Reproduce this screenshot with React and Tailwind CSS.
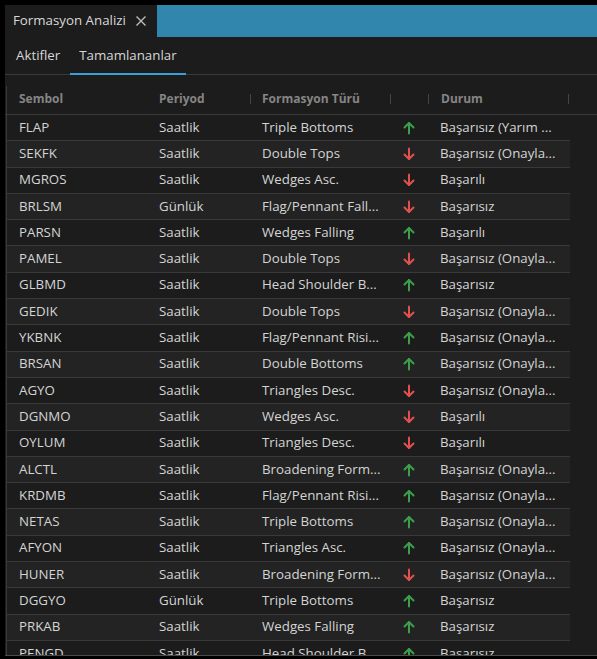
import React from "react";

const rows = [
  ["FLAP", "Saatlik", "Triple Bottoms", "up", "Başarısız (Yarım ..."],
  ["SEKFK", "Saatlik", "Double Tops", "down", "Başarısız (Onayla..."],
  ["MGROS", "Saatlik", "Wedges Asc.", "down", "Başarılı"],
  ["BRLSM", "Günlük", "Flag/Pennant Fall...", "down", "Başarısız"],
  ["PARSN", "Saatlik", "Wedges Falling", "up", "Başarılı"],
  ["PAMEL", "Saatlik", "Double Tops", "down", "Başarısız (Onayla..."],
  ["GLBMD", "Saatlik", "Head Shoulder B...", "up", "Başarısız"],
  ["GEDIK", "Saatlik", "Double Tops", "down", "Başarısız (Onayla..."],
  ["YKBNK", "Saatlik", "Flag/Pennant Risi...", "up", "Başarısız (Onayla..."],
  ["BRSAN", "Saatlik", "Double Bottoms", "up", "Başarısız (Onayla..."],
  ["AGYO", "Saatlik", "Triangles Desc.", "down", "Başarısız (Onayla..."],
  ["DGNMO", "Saatlik", "Wedges Asc.", "down", "Başarılı"],
  ["OYLUM", "Saatlik", "Triangles Desc.", "down", "Başarılı"],
  ["ALCTL", "Saatlik", "Broadening Form...", "up", "Başarısız (Onayla..."],
  ["KRDMB", "Saatlik", "Flag/Pennant Risi...", "up", "Başarısız (Onayla..."],
  ["NETAS", "Saatlik", "Triple Bottoms", "up", "Başarısız (Onayla..."],
  ["AFYON", "Saatlik", "Triangles Asc.", "up", "Başarısız (Onayla..."],
  ["HUNER", "Saatlik", "Broadening Form...", "down", "Başarısız (Onayla..."],
  ["DGGYO", "Günlük", "Triple Bottoms", "up", "Başarısız"],
  ["PRKAB", "Saatlik", "Wedges Falling", "up", "Başarısız"],
  ["PENGD", "Saatlik", "Head Shoulder B...", "up", "Başarısız"],
];

function Arrow({ dir }) {
  const up = dir === "up";
  return (
    <svg width="14" height="14" viewBox="0 0 14 14" fill="none"
      stroke={up ? "#3c9f4c" : "#e0514f"} strokeWidth="2" strokeLinecap="round" strokeLinejoin="round">
      {up ? (
        <>
          <path d="M7 12.5V2" />
          <path d="M2.5 6.5L7 2l4.5 4.5" />
        </>
      ) : (
        <>
          <path d="M7 1.5V12" />
          <path d="M2.5 7.5L7 12l4.5-4.5" />
        </>
      )}
    </svg>
  );
}

function Sep() {
  return <div className="w-px h-[10px] bg-[#454545]" />;
}

export default function App() {
  return (
    <div
      className="w-[597px] h-[659px] bg-black pt-[5px] pl-[5px] overflow-hidden"
      style={{ fontFamily: '"Open Sans", "Noto Sans", sans-serif' }}
    >
      <div className="h-[651px] bg-[#1c1c1c] border-b border-[#4a4a4a] flex flex-col overflow-hidden">
        {/* window tab bar */}
        <div className="flex h-[32px] shrink-0">
          <div className="w-[152px] flex items-center pl-[8px] gap-[9px] text-[13.3px] text-[#d8d8d8]">
            <span>Formasyon Analizi</span>
            <svg width="12" height="12" viewBox="0 0 12 12" stroke="#bdbdbd" strokeWidth="1.4">
              <path d="M1.5 1.5l9 9M10.5 1.5l-9 9" />
            </svg>
          </div>
          <div className="flex-1 bg-[#3086ad]" />
        </div>

        {/* sub tabs */}
        <div className="flex h-[38px] shrink-0 pt-[1px] border-b border-[#3a3a3a] text-[13.3px] text-[#d6d6d6]">
          <div className="pl-[11px] pr-[10px] flex items-center">Aktifler</div>
          <div className="relative px-[9px] flex items-center">
            Tamamlananlar
            <div className="absolute left-0 right-0 -bottom-px h-[2px] bg-[#3a9fd4]" />
          </div>
        </div>

        {/* header */}
        <div className="flex h-[40px] shrink-0 pt-[9px] border-b border-[#3a3a3a] text-[12px] font-bold text-[#858585]">
          <div className="w-[1px] self-stretch mt-[2px] bg-[#3a3a3a] ml-[1px]" />
          <div className="w-[140px] flex items-center pl-[12px]">Sembol</div>
          <div className="w-[103px] flex items-center pl-[12px]">Periyod</div>
          <div className="w-[140px] flex items-center">
            <Sep />
            <span className="pl-[11px]">Formasyon Türü</span>
          </div>
          <div className="w-[38px] flex items-center">
            <Sep />
          </div>
          <div className="w-[140px] flex items-center">
            <Sep />
            <span className="pl-[12px]">Durum</span>
          </div>
          <div className="flex items-center">
            <Sep />
          </div>
        </div>

        {/* body */}
        <div className="flex flex-col w-[564px] ml-[1px] border-l border-[#3a3a3a]">
          {rows.map((r, i) => (
            <div
              key={r[0]}
              className={
                "flex h-[26.3px] shrink-0 items-center border-b border-[#393939] text-[13.3px] text-[#d4d4d4] " +
                (i % 2 === 1 ? "bg-[#232323]" : "bg-[#1c1c1c]")
              }
            >
              <div className="w-[140px] pl-[12px] whitespace-nowrap">{r[0]}</div>
              <div className="w-[103px] pl-[12px] whitespace-nowrap">{r[1]}</div>
              <div className="w-[140px] pl-[12px] whitespace-nowrap">{r[2]}</div>
              <div className="w-[38px] flex justify-center">
                <Arrow dir={r[3]} />
              </div>
              <div className="w-[140px] pl-[12px] whitespace-nowrap">{r[4]}</div>
            </div>
          ))}
        </div>
      </div>
    </div>
  );
}
